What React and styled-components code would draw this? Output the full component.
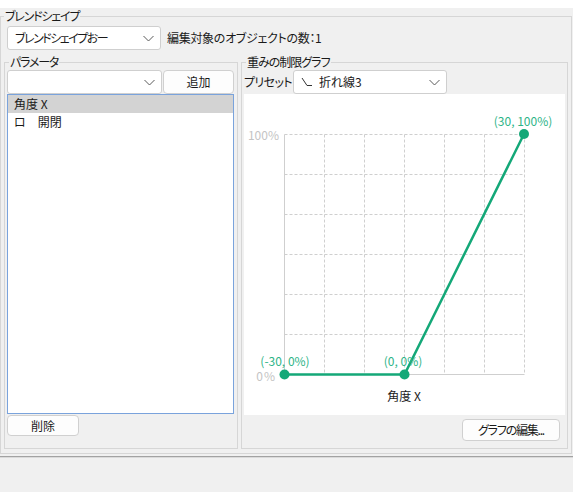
import React from "react";
import styled, { createGlobalStyle } from "styled-components";

const GlobalStyle = createGlobalStyle`
  html, body { margin: 0; padding: 0; }
  body {
    background: #f0f0f0;
    font-family: "Noto Sans CJK JP", "Noto Sans", sans-serif;
    font-size: 12px;
    color: #1a1a1a;
    font-feature-settings: "palt";
    width: 573px;
    height: 492px;
    overflow: hidden;
  }
  * { box-sizing: border-box; }
`;

const Page = styled.div`
  width: 573px;
  height: 492px;
  display: flex;
  flex-direction: column;
`;

const TopStrip = styled.div`
  height: 8px;
  background: #ffffff;
  flex: none;
`;

const Group = styled.fieldset`
  margin: 0;
  padding: 0;
  border: 1px solid #d6d6d6;
  min-width: 0;
  width: ${(p) => p.$w}px;
  height: ${(p) => (p.$h ? `${p.$h}px` : "auto")};
  flex: none;
  display: flex;
  flex-direction: column;
`;

const Legend = styled.legend`
  margin-left: ${(p) => p.$ml}px;
  padding: 0 1px;
  line-height: 16px;
  height: 16px;
  font-size: 12px;
  letter-spacing: ${(p) => p.$ls ?? 0}px;
  color: #1a1a1a;
`;

const GroupBody = styled.div`
  flex: 1;
  min-height: 0;
  display: flex;
  flex-direction: column;
  padding: ${(p) => p.$pad};
`;

const TopRow = styled.div`
  display: flex;
  align-items: center;
  height: 24px;
  margin-left: 3px;
  gap: 6px;
  flex: none;
`;

const GroupsRow = styled.div`
  display: flex;
  gap: 3px;
  margin-top: 4px;
  flex: 1;
  min-height: 0;
`;

const ComboBox = styled.div`
  width: ${(p) => p.$w}px;
  height: 24px;
  flex: none;
  background: #ffffff;
  border: 1px solid #cfcfcf;
  border-radius: 3px;
  display: flex;
  align-items: center;
  padding: 0 6px 0 ${(p) => p.$pl ?? 6}px;
  gap: 6px;
`;

const ComboText = styled.span`
  flex: 1;
  white-space: nowrap;
  overflow: hidden;
  line-height: 16px;
  letter-spacing: ${(p) => p.$ls ?? 0}px;
`;

const Info = styled.span`
  white-space: nowrap;
  line-height: 16px;
  letter-spacing: -0.3px;
`;

const Chevron = () => (
  <svg width="11" height="7" viewBox="0 0 11 7" style={{ flex: "none" }}>
    <polyline points="0.5,1 5.5,6 10.5,1" fill="none" stroke="#5a5a5a" strokeWidth="1" />
  </svg>
);

const PolylineIcon = () => (
  <svg width="12" height="10" viewBox="0 0 12 10" style={{ flex: "none" }}>
    <polyline points="1,1 6,8.5 11,8.5" fill="none" stroke="#333" strokeWidth="1" />
  </svg>
);

const ControlRow = styled.div`
  display: flex;
  align-items: center;
  gap: ${(p) => p.$gap}px;
  height: 24px;
  flex: none;
`;

const Button = styled.div`
  width: ${(p) => p.$w}px;
  height: ${(p) => p.$h}px;
  flex: none;
  background: #fdfdfd;
  border: 1px solid #d0d0d0;
  border-radius: 4px;
  display: flex;
  align-items: center;
  justify-content: center;
  line-height: 16px;
  white-space: nowrap;
  letter-spacing: ${(p) => p.$ls ?? 0}px;
  margin-top: ${(p) => p.$mt ?? 0}px;
  align-self: ${(p) => p.$align ?? "auto"};
  margin-right: ${(p) => p.$mr ?? 0}px;
`;

const List = styled.div`
  flex: 1;
  min-height: 0;
  background: #ffffff;
  border: 1px solid #7aa3dc;
  display: flex;
  flex-direction: column;
`;

const ListRow = styled.div`
  height: 18px;
  line-height: 18px;
  padding-left: 6px;
  background: ${(p) => (p.$selected ? "#d3d3d3" : "transparent")};
  white-space: pre;
`;

const PresetLabel = styled.span`
  width: 49px;
  flex: none;
  line-height: 16px;
  white-space: nowrap;
  letter-spacing: -0.6px;
`;

const GraphArea = styled.div`
  width: 321px;
  height: 321px;
  background: #ffffff;
  flex: none;
`;

const Divider = styled.div`
  margin-top: 2px;
  height: 2px;
  border-top: 1px solid #a2a2a2;
  border-bottom: 1px solid #dadada;
  flex: none;
`;

const GREEN = "#14a878";
const LABEL_GREEN = "#2db487";

const Graph = () => {
  const grid = [];
  for (let i = 1; i <= 6; i++) {
    const v = 40 + i * 40;
    grid.push(
      <line key={`v${i}`} x1={v} y1={40} x2={v} y2={280} stroke="#cfcfcf" strokeWidth="1" strokeDasharray="3,2" />
    );
  }
  for (let i = 0; i < 6; i++) {
    const h = 40 + i * 40;
    grid.push(
      <line key={`h${i}`} x1={40} y1={h} x2={280} y2={h} stroke="#cfcfcf" strokeWidth="1" strokeDasharray="3,2" />
    );
  }
  const font = { fontFamily: '"Noto Sans CJK JP", "Noto Sans", sans-serif', fontSize: 12 };
  return (
    <svg width="321" height="321" viewBox="0 0 321 321">
      <g transform="translate(0.5,0.5)">
        {grid}
        <line x1={40} y1={40} x2={40} y2={280} stroke="#cfcfcf" strokeWidth="1" />
        <line x1={40} y1={280} x2={280} y2={280} stroke="#cfcfcf" strokeWidth="1" />
      </g>
      <text x={35} y={46} textAnchor="end" fill="#c4c4c4" style={font}>100%</text>
      <text x={32} y={287} textAnchor="end" fill="#c4c4c4" style={font} letterSpacing="1">0%</text>
      <polyline points="40.5,280.5 160.5,280.5 280,40" fill="none" stroke={GREEN} strokeWidth="2.5" />
      <circle cx={40.5} cy={280.5} r={5} fill={GREEN} />
      <circle cx={160.5} cy={280.5} r={5} fill={GREEN} />
      <circle cx={280} cy={40} r={5} fill={GREEN} />
      <text x={41} y={272} textAnchor="middle" fill={LABEL_GREEN} style={font}>(-30, 0%)</text>
      <text x={159} y={272} textAnchor="middle" fill={LABEL_GREEN} style={font}>(0, 0%)</text>
      <text x={279} y={32} textAnchor="middle" fill={LABEL_GREEN} style={font}>(30, 100%)</text>
      <text x={160} y={307} textAnchor="middle" fill="#1a1a1a" style={font}>角度 X</text>
    </svg>
  );
};

export default function App() {
  return (
    <>
      <GlobalStyle />
      <Page>
        <TopStrip />
        <Group $w={572} $h={446}>
          <Legend $ml={3} $ls={-1.2}>ブレンドシェイプ</Legend>
          <GroupBody $pad="2px 3px 4px 3px">
            <TopRow>
              <ComboBox $w={154} $pl={7}>
                <ComboText $ls={-1.5}>ブレンドシェイプおー</ComboText>
                <Chevron />
              </ComboBox>
              <Info>編集対象のオブジェクトの数：1</Info>
            </TopRow>
            <GroupsRow>
              <Group $w={234}>
                <Legend $ml={4} $ls={-1.2}>パラメータ</Legend>
                <GroupBody $pad="0 3px 12px 2px">
                  <ControlRow $gap={1}>
                    <ComboBox $w={155}>
                      <ComboText />
                      <Chevron />
                    </ComboBox>
                    <Button $w={71} $h={24}>追加</Button>
                  </ControlRow>
                  <List>
                    <ListRow $selected>角度 X</ListRow>
                    <ListRow>{"ロ　開閉"}</ListRow>
                  </List>
                  <Button $w={72} $h={21} $mt={1}>削除</Button>
                </GroupBody>
              </Group>
              <Group $w={327}>
                <Legend $ml={4} $ls={-1}>重みの制限グラフ</Legend>
                <GroupBody $pad="0 2px 7px 2px">
                  <ControlRow $gap={0}>
                    <PresetLabel>プリセット</PresetLabel>
                    <ComboBox $w={154} $pl={7}>
                      <PolylineIcon />
                      <ComboText>折れ線3</ComboText>
                      <Chevron />
                    </ComboBox>
                  </ControlRow>
                  <GraphArea>
                    <Graph />
                  </GraphArea>
                  <Button $w={98} $h={22} $mt={4} $align="flex-end" $mr={5} $ls={-1.2}>
                    グラフの編集...
                  </Button>
                </GroupBody>
              </Group>
            </GroupsRow>
          </GroupBody>
        </Group>
        <Divider />
      </Page>
    </>
  );
}
